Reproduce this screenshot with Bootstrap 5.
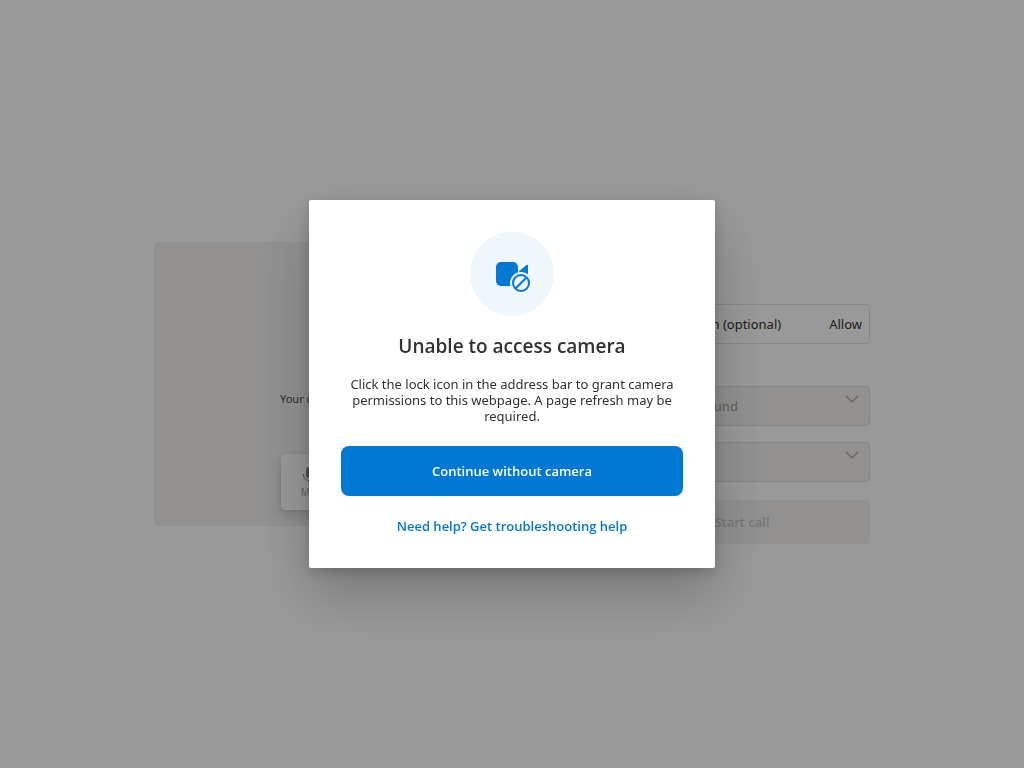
<!DOCTYPE html>
<html lang="en">
<head>
<meta charset="utf-8">
<meta name="viewport" content="width=device-width, initial-scale=1">
<title>Start a call</title>
<link href="https://cdn.jsdelivr.net/npm/bootstrap@5.3.0/dist/css/bootstrap.min.css" rel="stylesheet">
<style>
  body { font-family: "Noto Sans", "Open Sans", sans-serif; font-size: 13px; line-height: 16px; color: #323130; }
  .setup-page { gap: 32px; }
  .preview { width: 400px; height: 284px; background: #f3f2f1; border-radius: 4px; }
  .preview-note { width: 148px; font-size: 11px; margin-bottom: 47px; color: #484644; }
  .call-controls { width: 146px; height: 56px; margin-bottom: 16px; background: #fff; border-radius: 4px; box-shadow: 0 6px 14px rgba(0,0,0,.13), 0 1px 4px rgba(0,0,0,.11); }
  .control { width: 56px; border: 0; background: none; color: #8a8886; font-size: 10px; line-height: 14px; }
  .control-label { color: #a19f9d; }
  .setup-form { width: 284px; }
  .setup-title { font-size: 20px; line-height: 24px; font-weight: 600; margin-bottom: 56px; }
  .permission { height: 40px; border: 1px solid #e1dfdd; border-radius: 4px; padding: 0 7px; }
  .field-label { margin: 16px 0 10px; }
  .field { height: 40px; width: 100%; appearance: none; border: 1px solid #e1dfdd; border-radius: 4px; color: #a19f9d; opacity: 1; padding: 0 32px 0 16px;
    background: #f3f2f1 url("data:image/svg+xml,%3Csvg xmlns='http://www.w3.org/2000/svg' width='14' height='8' fill='none' stroke='%23a19f9d' stroke-width='1.2'%3E%3Cpath d='M1 1l6 6 6-6'/%3E%3C/svg%3E") no-repeat right 10px top 8px; }
  .start { height: 44px; margin-top: 18px; gap: 8px; border: 0; border-radius: 4px; background: #f3f2f1; color: #c8c6c4; font-family: "Open Sans", sans-serif; font-weight: 600; }
  .shade { background: rgba(0,0,0,.4); }
  .prompt-dialog { max-width: 406px; }
  .prompt { border: 0; border-radius: 2px; padding: 32px; color: #323130; box-shadow: 0 26px 58px rgba(0,0,0,.22), 0 5px 14px rgba(0,0,0,.18); }
  .prompt-icon { width: 84px; height: 84px; background: #eff6fc; }
  .prompt-title, .prompt-action, .prompt-link { font-family: "Open Sans", sans-serif; font-weight: 600; }
  .prompt-title { font-size: 19px; line-height: 28px; margin: 16px 0; }
  .prompt-text { margin-bottom: 22px; }
  .prompt-action { height: 50px; background: #0078d4; color: #fff; border: 0; border-radius: 8px; }
  .prompt-link { color: #0078d4; text-decoration: none; margin: 22px 0 2px; }
</style>
</head>
<body class="bg-white">
<main class="setup-page min-vh-100 d-flex align-items-center justify-content-center">
  <section class="preview d-flex flex-column align-items-center justify-content-end" aria-label="Video preview">
    <p class="preview-note">Your camera is turned off</p>
    <div class="call-controls d-flex">
      <button class="control d-flex flex-column align-items-center justify-content-center p-0" type="button" disabled>
        <svg width="20" height="20" viewBox="0 0 20 20" fill="currentColor" aria-hidden="true"><rect x="7" y="2" width="6" height="11" rx="3"/><path d="M4.5 9.5v.5a5.5 5.5 0 0 0 11 0v-.5M10 15.500V18" fill="none" stroke="currentColor" stroke-linecap="round"/></svg>
        <span class="control-label">Mic</span>
      </button>
    </div>
  </section>
  <form class="setup-form">
    <h1 class="setup-title">Start a call</h1>
    <div class="permission d-flex align-items-center justify-content-end gap-5">
      <span>Camera permission (optional)</span>
      <span>Allow</span>
    </div>
    <label class="field-label d-block" for="mic">Sound</label>
    <select class="field d-block mb-3" id="mic" disabled><option>No microphone found</option></select>
    <select class="field d-block" aria-label="Speaker" disabled><option></option></select>
    <button class="start w-100 d-flex align-items-center justify-content-center" type="button" disabled>
      <svg width="20" height="20" viewBox="0 0 20 20" fill="currentColor" aria-hidden="true"><rect x="2" y="5" width="11" height="10" rx="2"/><path d="M14 9l4-3v8l-4-3z"/></svg>
      Start call
    </button>
  </form>
</main>

<div class="modal shade d-block" role="dialog" aria-modal="true" aria-labelledby="prompt-title">
  <div class="modal-dialog modal-dialog-centered prompt-dialog">
    <div class="modal-content prompt align-items-center text-center">
      <div class="prompt-icon rounded-circle d-flex align-items-center justify-content-center">
        <svg width="36" height="36" viewBox="0 0 36 36" aria-hidden="true">
          <rect x="2" y="6" width="22" height="24" rx="5" fill="#0078d4"/>
          <path d="M25 15.500l7-6.300Q34 8 34 9.500v12h-9z" fill="#0078d4"/>
          <circle cx="27" cy="27" r="11" fill="#eff6fc"/>
          <g fill="none" stroke="#0078d4" stroke-width="2"><circle cx="27" cy="27" r="8"/><path d="M21.500 32.500l11-11"/></g>
        </svg>
      </div>
      <h2 class="prompt-title" id="prompt-title">Unable to access camera</h2>
      <p class="prompt-text">Click the lock icon in the address bar to grant camera permissions to this webpage. A page refresh may be required.</p>
      <button class="prompt-action w-100" type="button">Continue without camera</button>
      <a class="prompt-link" href="#">Need help? Get troubleshooting help</a>
    </div>
  </div>
</div>
<script src="https://cdn.jsdelivr.net/npm/bootstrap@5.3.0/dist/js/bootstrap.bundle.min.js"></script>
</body>
</html>
